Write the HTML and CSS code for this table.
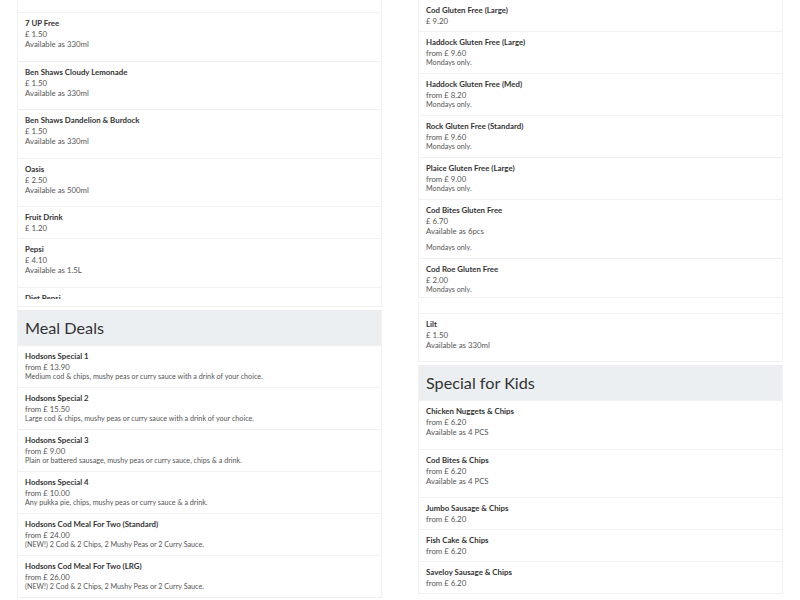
FILE: index.html
```html
<!DOCTYPE html>
<html lang="en">
<head>
<meta charset="utf-8">
<title>Menu</title>
<link rel="stylesheet" href="styles.css">
</head>
<body>
<div class="menu">
  <div class="col">
    <section class="card drinks-left">
      <div class="viewport">
        <div class="tail"></div>
        <div class="item"><div class="name">7 UP Free</div><div class="price">£ 1.50</div><div class="avail">Available as 330ml</div></div>
        <div class="item"><div class="name">Ben Shaws Cloudy Lemonade</div><div class="price">£ 1.50</div><div class="avail">Available as 330ml</div></div>
        <div class="item"><div class="name">Ben Shaws Dandelion &amp; Burdock</div><div class="price">£ 1.50</div><div class="avail">Available as 330ml</div></div>
        <div class="item"><div class="name">Oasis</div><div class="price">£ 2.50</div><div class="avail">Available as 500ml</div></div>
        <div class="item"><div class="name">Fruit Drink</div><div class="price">£ 1.20</div></div>
        <div class="item"><div class="name">Pepsi</div><div class="price">£ 4.10</div><div class="avail">Available as 1.5L</div></div>
        <div class="item"><div class="name">Diet Pepsi</div><div class="price">£ 4.10</div><div class="avail">Available as 1.5L</div></div>
      </div>
    </section>
    <section class="card">
      <h2 class="heading">Meal Deals</h2>
      <div class="item"><div class="name">Hodsons Special 1</div><div class="price">from £ 13.90</div><div class="note">Medium cod &amp; chips, mushy peas or curry sauce with a drink of your choice.</div></div>
      <div class="item"><div class="name">Hodsons Special 2</div><div class="price">from £ 15.50</div><div class="note">Large cod &amp; chips, mushy peas or curry sauce with a drink of your choice.</div></div>
      <div class="item"><div class="name">Hodsons Special 3</div><div class="price">from £ 9.00</div><div class="note">Plain or battered sausage, mushy peas or curry sauce, chips &amp; a drink.</div></div>
      <div class="item"><div class="name">Hodsons Special 4</div><div class="price">from £ 10.00</div><div class="note">Any pukka pie, chips, mushy peas or curry sauce &amp; a drink.</div></div>
      <div class="item"><div class="name">Hodsons Cod Meal For Two (Standard)</div><div class="price">from £ 24.00</div><div class="note">(NEW!) 2 Cod &amp; 2 Chips, 2 Mushy Peas or 2 Curry Sauce.</div></div>
      <div class="item"><div class="name">Hodsons Cod Meal For Two (LRG)</div><div class="price">from £ 26.00</div><div class="note">(NEW!) 2 Cod &amp; 2 Chips, 2 Mushy Peas or 2 Curry Sauce.</div></div>
    </section>
  </div>
  <div class="col">
    <section class="card gluten">
      <div class="item first"><div class="name">Cod Gluten Free (Large)</div><div class="price">£ 9.20</div></div>
      <div class="item"><div class="name">Haddock Gluten Free (Large)</div><div class="price">from £ 9.60</div><div class="note">Mondays only.</div></div>
      <div class="item"><div class="name">Haddock Gluten Free (Med)</div><div class="price">from £ 8.20</div><div class="note">Mondays only.</div></div>
      <div class="item"><div class="name">Rock Gluten Free (Standard)</div><div class="price">from £ 9.60</div><div class="note">Mondays only.</div></div>
      <div class="item"><div class="name">Plaice Gluten Free (Large)</div><div class="price">from £ 9.00</div><div class="note">Mondays only.</div></div>
      <div class="item"><div class="name">Cod Bites Gluten Free</div><div class="price">£ 6.70</div><div class="avail">Available as 6pcs</div><div class="note">Mondays only.</div></div>
      <div class="item"><div class="name">Cod Roe Gluten Free</div><div class="price">£ 2.00</div><div class="note">Mondays only.</div></div>
    </section>
    <section class="card drinks-right">
      <div class="tail"></div>
      <div class="item"><div class="name">Lilt</div><div class="price">£ 1.50</div><div class="avail">Available as 330ml</div></div>
    </section>
    <section class="card">
      <h2 class="heading">Special for Kids</h2>
      <div class="item"><div class="name">Chicken Nuggets &amp; Chips</div><div class="price">from £ 6.20</div><div class="avail">Available as 4 PCS</div></div>
      <div class="item"><div class="name">Cod Bites &amp; Chips</div><div class="price">from £ 6.20</div><div class="avail">Available as 4 PCS</div></div>
      <div class="item"><div class="name">Jumbo Sausage &amp; Chips</div><div class="price">from £ 6.20</div></div>
      <div class="item"><div class="name">Fish Cake &amp; Chips</div><div class="price">from £ 6.20</div></div>
      <div class="item"><div class="name">Saveloy Sausage &amp; Chips</div><div class="price">from £ 6.20</div></div>
    </section>
  </div>
</div>
</body>
</html>
```
FILE: styles.css
```css
html, body {
  margin: 0;
  padding: 0;
  background: #ffffff;
}
body {
  font-family: Lato, "Open Sans", sans-serif;
  color: #333;
  height: 600px;
  overflow: hidden;
}
.menu {
  display: grid;
  grid-template-columns: 365px 365px;
  column-gap: 36px;
  padding: 0 17px;
  align-items: start;
}
.col {
  display: flex;
  flex-direction: column;
  gap: 3px;
}
.card {
  background: #fff;
  border: 1px solid #f1f1f1;
  border-top: none;
  box-sizing: border-box;
}
.drinks-left {
  padding-bottom: 7px;
}
.viewport {
  height: 299px;
  overflow: hidden;
}
.drinks-right {
  height: 61px;
  overflow: hidden;
}
.gluten {
  height: 298px;
  overflow: hidden;
}
.tail {
  height: 12px;
}
.heading {
  margin: 0;
  background: #eceff1;
  font-weight: 400;
  font-size: 16.2px;
  line-height: 35px;
  height: 35px;
  padding: 0 7px;
  color: #333;
}
.item {
  border-top: 1px solid #f1f1f1;
  padding: 5px 7px 5px;
}
.item.first {
  border-top: none;
}
.name {
  font-weight: 700;
  font-size: 7.85px;
  line-height: 11px;
  color: #333;
}
.price {
  font-size: 7.8px;
  line-height: 10px;
  color: #555;
}
.avail {
  font-size: 7.8px;
  line-height: 10.5px;
  color: #555;
  margin-bottom: 6px;
}
.note {
  font-size: 7.2px;
  line-height: 10px;
  color: #555;
}
```
